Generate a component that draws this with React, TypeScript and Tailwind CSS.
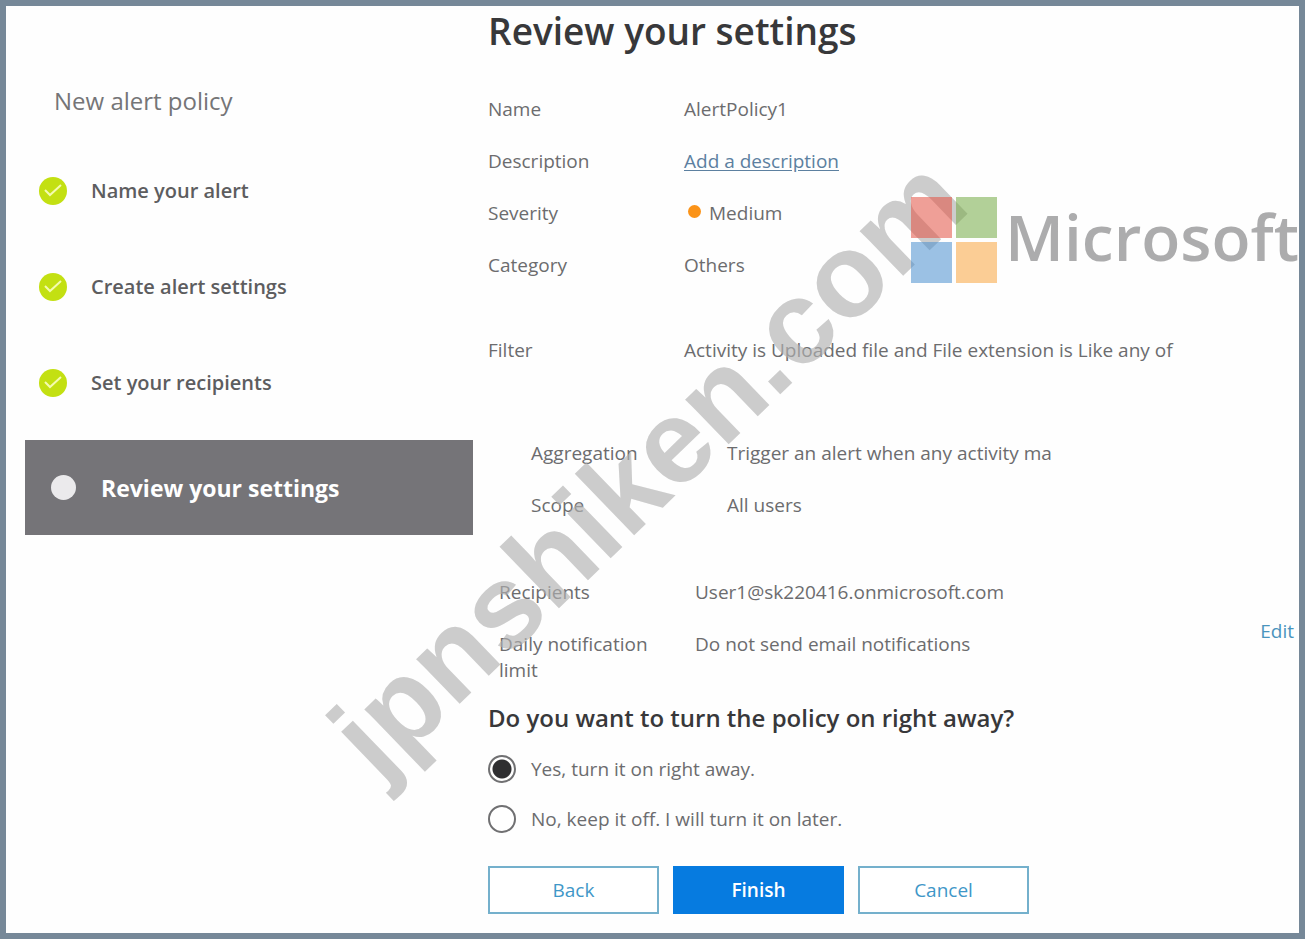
import { useState } from 'react';
import type { ReactNode } from 'react';

const completedSteps = ['Name your alert', 'Create alert settings', 'Set your recipients'];

const activationOptions = [
  { value: 'on', label: 'Yes, turn it on right away.' },
  { value: 'off', label: 'No, keep it off. I will turn it on later.' },
];

export default function App() {
  const [activation, setActivation] = useState('on');

  return (
    <div className="relative flex min-h-screen overflow-hidden border-6 border-[#768898] bg-[#fefefe] font-['Open_Sans',sans-serif] text-[19px] leading-[26px] text-[#6c6c6e]">
      <StepNav />

      <main className="min-w-0 flex-1 pb-4 pl-[15px]">
        <h1 className="text-[37px] leading-[50px] font-semibold text-[#38383a]">Review your settings</h1>

        <dl className="mt-10 flex flex-col gap-[26px]">
          <Row label="Name">AlertPolicy1</Row>
          <Row label="Description">
            <a href="#description" className="text-[#5c80a0] underline underline-offset-2">
              Add a description
            </a>
          </Row>
          <Row label="Severity">
            <span className="flex items-center gap-2 pl-1">
              <span className="mb-1 size-[13px] rounded-full bg-[#fb9318]" />
              Medium
            </span>
          </Row>
          <Row label="Category">Others</Row>
        </dl>

        <dl className="mt-[59px]">
          <Row label="Filter">Activity is Uploaded file and File extension is Like any of</Row>
        </dl>

        <dl className="mt-[77px] flex flex-col gap-[26px] pl-[43px]">
          <Row label="Aggregation">Trigger an alert when any activity ma</Row>
          <Row label="Scope">All users</Row>
        </dl>

        <div className="mt-[61px] flex items-center justify-between pr-[5px] pl-[11px]">
          <dl className="flex flex-col gap-[26px]">
            <Row label="Recipients">User1@sk220416.onmicrosoft.com</Row>
            <Row label="Daily notification limit">Do not send email notifications</Row>
          </dl>
          <a href="#edit" className="text-[#4a94bd]">
            Edit
          </a>
        </div>

        <fieldset className="mt-5">
          <legend className="text-[24px] leading-[30px] font-semibold text-[#38383a]">
            Do you want to turn the policy on right away?
          </legend>
          <div className="mt-[22px] flex flex-col gap-[22px]">
            {activationOptions.map(({ value, label }) => (
              <label key={value} className="flex h-7 items-center gap-[15px]">
                <input
                  type="radio"
                  name="activation"
                  value={value}
                  checked={activation === value}
                  onChange={() => setActivation(value)}
                  className="size-7 appearance-none rounded-full border-2 border-[#707072] bg-white checked:bg-[radial-gradient(circle,#2f2f31_9px,white_10px)]"
                />
                {label}
              </label>
            ))}
          </div>
        </fieldset>

        <div className="mt-[33px] flex gap-[14px]">
          <button type="button" className="h-12 w-[171px] border-2 border-[#74b0cc] bg-white text-[#3f97c8]">
            Back
          </button>
          <button type="button" className="h-12 w-[171px] bg-[#067be0] font-semibold text-white">
            Finish
          </button>
          <button type="button" className="h-12 w-[171px] border-2 border-[#74b0cc] bg-white text-[#3f97c8]">
            Cancel
          </button>
        </div>
      </main>

      <Watermark />
      <MicrosoftLogo />
    </div>
  );
}

function StepNav() {
  return (
    <nav className="w-[467px] shrink-0 pt-[79px] pl-[19px]">
      <h2 className="pl-[29px] text-[24px] leading-8 text-[#757577]">New alert policy</h2>
      <ol className="mt-[60px] flex flex-col gap-[68px] text-[20px] font-semibold text-[#5d5d5f]">
        {completedSteps.map((step) => (
          <li key={step} className="flex h-7 items-center gap-6 pl-[14px]">
            <CheckIcon className="size-7 shrink-0" />
            {step}
          </li>
        ))}
      </ol>
      <div
        aria-current="step"
        className="mt-[43px] flex h-[95px] items-center gap-[25px] bg-[#757478] pl-[26px] text-[23px] font-bold text-white"
      >
        <span className="size-[25px] rounded-full bg-[#ebeaec]" />
        Review your settings
      </div>
    </nav>
  );
}

function Row({ label, children }: { label: string; children: ReactNode }) {
  return (
    <div className="flex">
      <dt className="w-[196px] shrink-0 pr-8">{label}</dt>
      <dd className="whitespace-nowrap">{children}</dd>
    </div>
  );
}

function CheckIcon({ className }: { className?: string }) {
  return (
    <svg viewBox="0 0 28 28" className={className}>
      <circle cx="14" cy="14" r="14" fill="#c3e012" />
      <path d="M6 13l5 5L22 8" fill="none" stroke="#f4fbb0" strokeWidth="2" />
    </svg>
  );
}

function Watermark() {
  return (
    <div className="pointer-events-none absolute inset-0 flex items-center justify-center pr-[10px] pb-2">
      <span className="-rotate-44 font-['Liberation_Sans',sans-serif] text-[118px] leading-none font-bold text-[#b0b0b0]/65">
        jpnshiken.com
      </span>
    </div>
  );
}

function MicrosoftLogo() {
  return (
    <div className="pointer-events-none absolute top-[191px] right-0 flex items-start gap-2 opacity-55">
      <svg viewBox="0 0 86 86" className="size-[86px]">
        <path d="M0 0h41v41H0z" fill="#e45243" />
        <path d="M45 0h41v41H45z" fill="#75ab45" />
        <path d="M0 45h41v41H0z" fill="#4b90cf" />
        <path d="M45 45h41v41H45z" fill="#f9a640" />
      </svg>
      <span className="text-[64px] leading-[80px] font-semibold text-[#6a6a6c]">Microsoft</span>
    </div>
  );
}
